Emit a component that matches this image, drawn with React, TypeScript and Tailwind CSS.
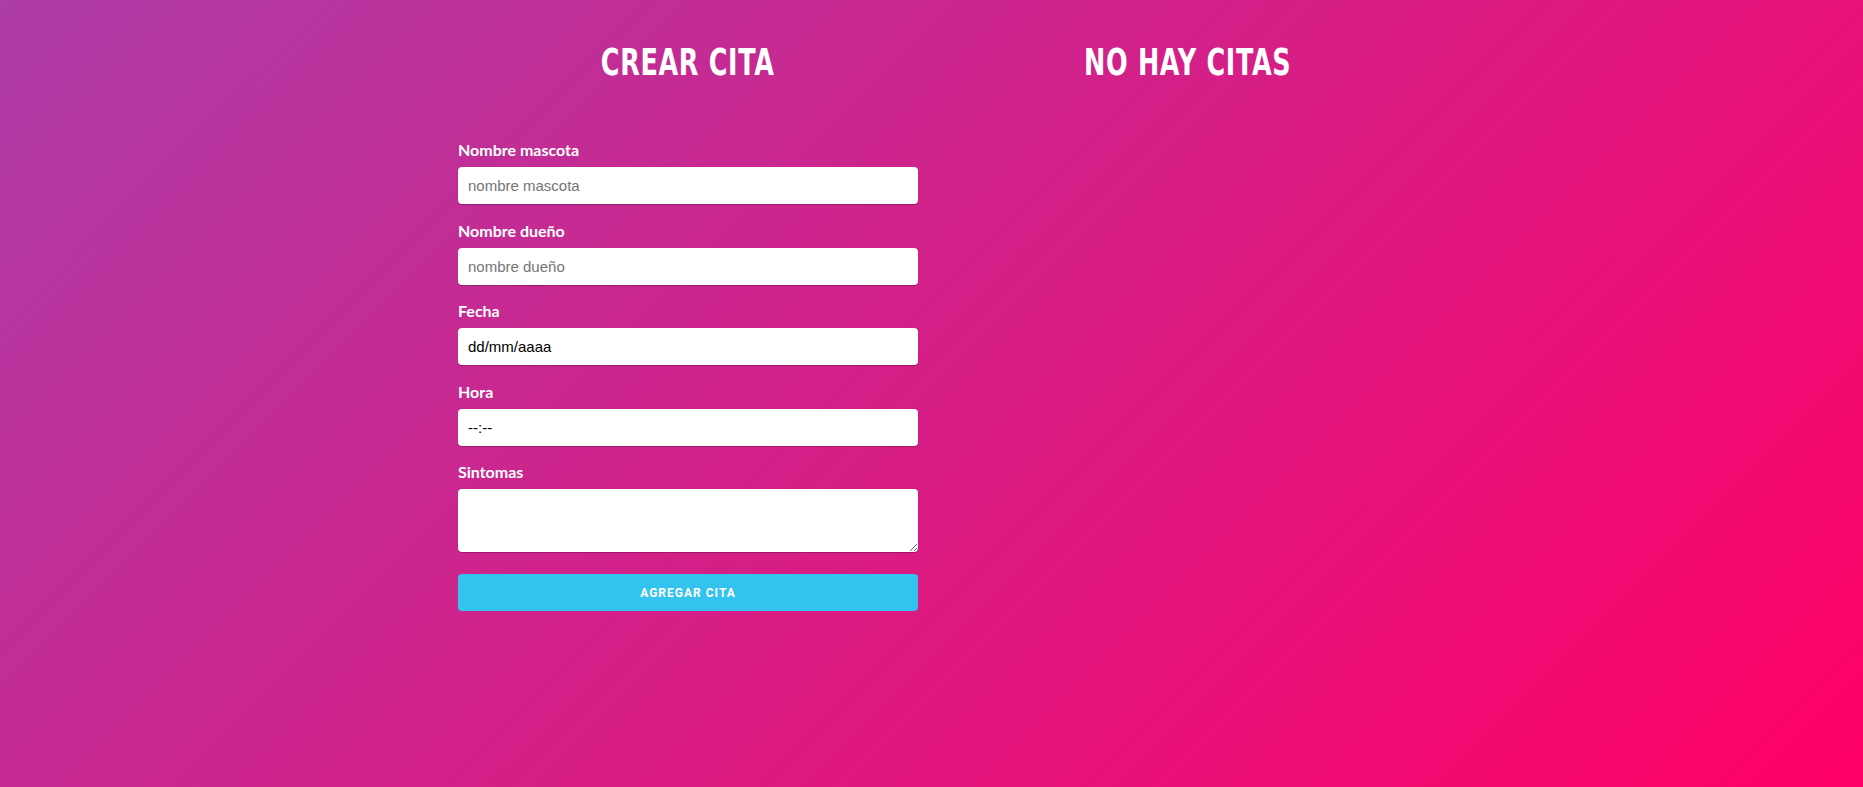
import React from 'react'

const labelClass = "block h-5 mb-[7px] text-[16px] leading-5 font-bold text-white font-['Lato','Open_Sans',sans-serif]"
const inputClass =
  "block w-full h-[37px] px-[10px] rounded-[4px] bg-white text-[15px] text-black font-['Liberation_Sans',Arial,sans-serif] shadow-[0_1px_1px_rgba(0,0,0,0.25)] outline-none placeholder:text-[#757575]"
const titleClass =
  "inline-block scale-x-[0.67] h-[44px] leading-[44px] text-[38px] font-bold uppercase text-white tracking-[1px] font-['DejaVu_Sans',sans-serif]"

const Field = (props: { label: string; children: React.ReactNode }) => {
  return (
    <div className="mb-[16.5px]">
      <label className={labelClass}>{props.label}</label>
      {props.children}
    </div>
  )
}

export default function App() {
  return (
    <div className="min-h-[787px] w-full bg-[linear-gradient(135deg,#ad3ca6,#ff0066)]">
      <div className="mx-auto w-[1013px] pl-[13px] flex">
        {/* formulario */}
        <div className="w-[500px] flex flex-col items-center">
          <div className="mt-[40px] w-full text-center">
            <h2 className={titleClass}>Crear cita</h2>
          </div>
          <form className="w-[460px] mt-[56px]">
            <Field label="Nombre mascota">
              <input type="text" className={inputClass} placeholder="nombre mascota" />
            </Field>
            <Field label="Nombre dueño">
              <input type="text" className={inputClass} placeholder="nombre dueño" />
            </Field>
            <Field label="Fecha">
              <input type="text" className={inputClass} defaultValue="dd/mm/aaaa" />
            </Field>
            <Field label="Hora">
              <input type="text" className={inputClass} defaultValue="--:--" />
            </Field>
            <div className="mb-[22px]">
              <label className={labelClass}>Sintomas</label>
              <textarea className="block w-full h-[63px] px-[10px] py-2 rounded-[4px] bg-white text-[15px] shadow-[0_1px_1px_rgba(0,0,0,0.25)] outline-none" />
            </div>
            <button
              type="button"
              className="block w-full h-[37px] rounded-[4px] bg-[#33c3ef] text-white text-[12px] font-bold uppercase tracking-[1px] font-['Roboto','Liberation_Sans',sans-serif]"
            >
              Agregar cita
            </button>
          </form>
        </div>

        {/* listado */}
        <div className="w-[500px] flex flex-col items-center">
          <div className="mt-[40px] w-full text-center">
            <h2 className={titleClass}>No hay citas</h2>
          </div>
        </div>
      </div>
    </div>
  )
}
